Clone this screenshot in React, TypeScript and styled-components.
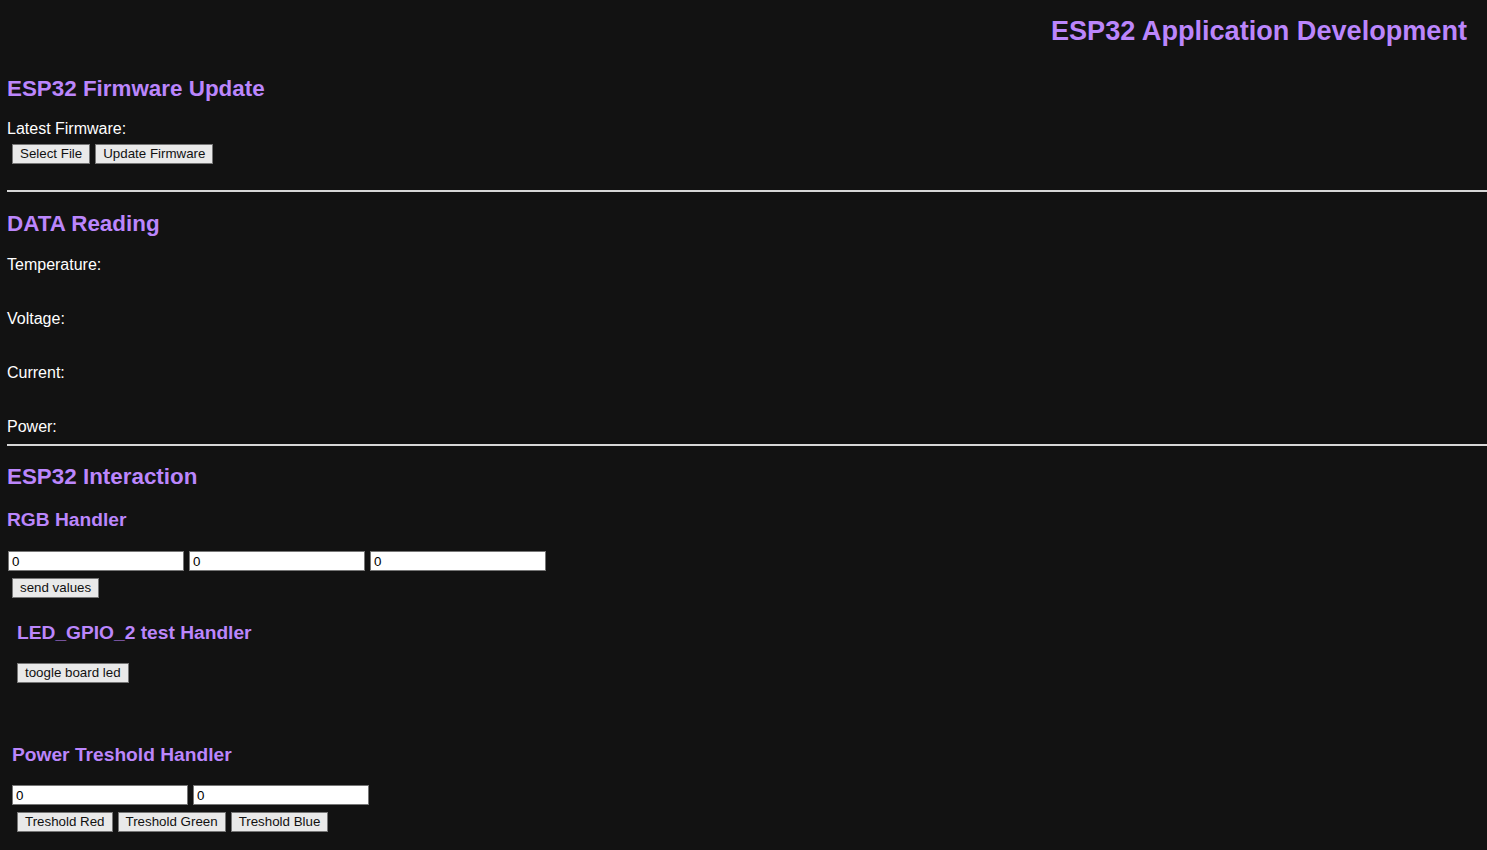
import React, { useState } from "react";
import styled, { createGlobalStyle } from "styled-components";

const GlobalStyle = createGlobalStyle`
  html, body {
    margin: 0;
    padding: 0;
    background-color: #121212;
  }
  body {
    font-family: "Liberation Sans", Arial, sans-serif;
    color: #ffffff;
  }
`;

const Page = styled.div`
  padding: 15px 0 20px 7px;
  min-height: 850px;
  box-sizing: border-box;
`;

const Title = styled.h1`
  margin: 0 20px 0 0;
  text-align: right;
  font-size: 27.1px;
  line-height: 32px;
  font-weight: bold;
  color: #bb86fc;
`;

const SectionTitle = styled.h2<{ $top: number }>`
  margin: ${(p) => p.$top}px 0 0 0;
  font-size: 22.4px;
  line-height: 28px;
  font-weight: bold;
  color: #bb86fc;
`;

const SubTitle = styled.h3<{ $top: number; $indent?: number }>`
  margin: ${(p) => p.$top}px 0 0 ${(p) => p.$indent || 0}px;
  font-size: 19.2px;
  line-height: 22px;
  font-weight: bold;
  color: #bb86fc;
`;

const Label = styled.div<{ $top: number }>`
  margin-top: ${(p) => p.$top}px;
  font-size: 16px;
  line-height: 18px;
`;

const Divider = styled.hr<{ $top: number }>`
  margin: ${(p) => p.$top}px 0 0 0;
  border: none;
  height: 2px;
  background-color: #d6d6d6;
`;

const Row = styled.div<{ $top: number; $indent: number }>`
  display: flex;
  gap: 5px;
  margin-top: ${(p) => p.$top}px;
  margin-left: ${(p) => p.$indent}px;
`;

const Button = styled.button`
  height: 20px;
  padding: 0 7px;
  margin: 0;
  border: 1px solid #767676;
  border-radius: 0;
  background-color: #e9e9e9;
  color: #111111;
  font-family: "Liberation Sans", Arial, sans-serif;
  font-size: 13.33px;
  line-height: 18px;
  cursor: pointer;
`;

const NumberInput = styled.input`
  width: 176px;
  height: 20px;
  box-sizing: border-box;
  margin: 0;
  padding: 0 3px;
  border: 1px solid #767676;
  background-color: #ffffff;
  color: #000000;
  font-family: "Liberation Sans", Arial, sans-serif;
  font-size: 13.33px;
`;

const readings = ["Temperature:", "Voltage:", "Current:", "Power:"];

export default function App() {
  const [rgb, setRgb] = useState(["0", "0", "0"]);
  const [limits, setLimits] = useState(["0", "0"]);

  return (
    <>
      <GlobalStyle />
      <Page>
        <Title>ESP32 Application Development</Title>

        <SectionTitle $top={28}>ESP32 Firmware Update</SectionTitle>
        <Label $top={17}>Latest Firmware:</Label>
        <Row $top={6} $indent={5}>
          <Button>Select File</Button>
          <Button>Update Firmware</Button>
        </Row>

        <Divider $top={26} />

        <SectionTitle $top={18}>DATA Reading</SectionTitle>
        {readings.map((r, i) => (
          <Label key={r} $top={i === 0 ? 18 : 36}>
            {r}
          </Label>
        ))}

        <Divider $top={8} />

        <SectionTitle $top={17}>ESP32 Interaction</SectionTitle>
        <SubTitle $top={18}>RGB Handler</SubTitle>
        <Row $top={20} $indent={1}>
          {rgb.map((v, i) => (
            <NumberInput
              key={i}
              value={v}
              onChange={(e) => setRgb(rgb.map((x, j) => (j === i ? e.target.value : x)))}
            />
          ))}
        </Row>
        <Row $top={7} $indent={5}>
          <Button>send values</Button>
        </Row>

        <SubTitle $top={24} $indent={10}>LED_GPIO_2 test Handler</SubTitle>
        <Row $top={19} $indent={10}>
          <Button>toogle board led</Button>
        </Row>

        <SubTitle $top={61} $indent={5}>Power Treshold Handler</SubTitle>
        <Row $top={19} $indent={5}>
          {limits.map((v, i) => (
            <NumberInput
              key={i}
              value={v}
              onChange={(e) => setLimits(limits.map((x, j) => (j === i ? e.target.value : x)))}
            />
          ))}
        </Row>
        <Row $top={7} $indent={10}>
          <Button>Treshold Red</Button>
          <Button>Treshold Green</Button>
          <Button>Treshold Blue</Button>
        </Row>
      </Page>
    </>
  );
}
